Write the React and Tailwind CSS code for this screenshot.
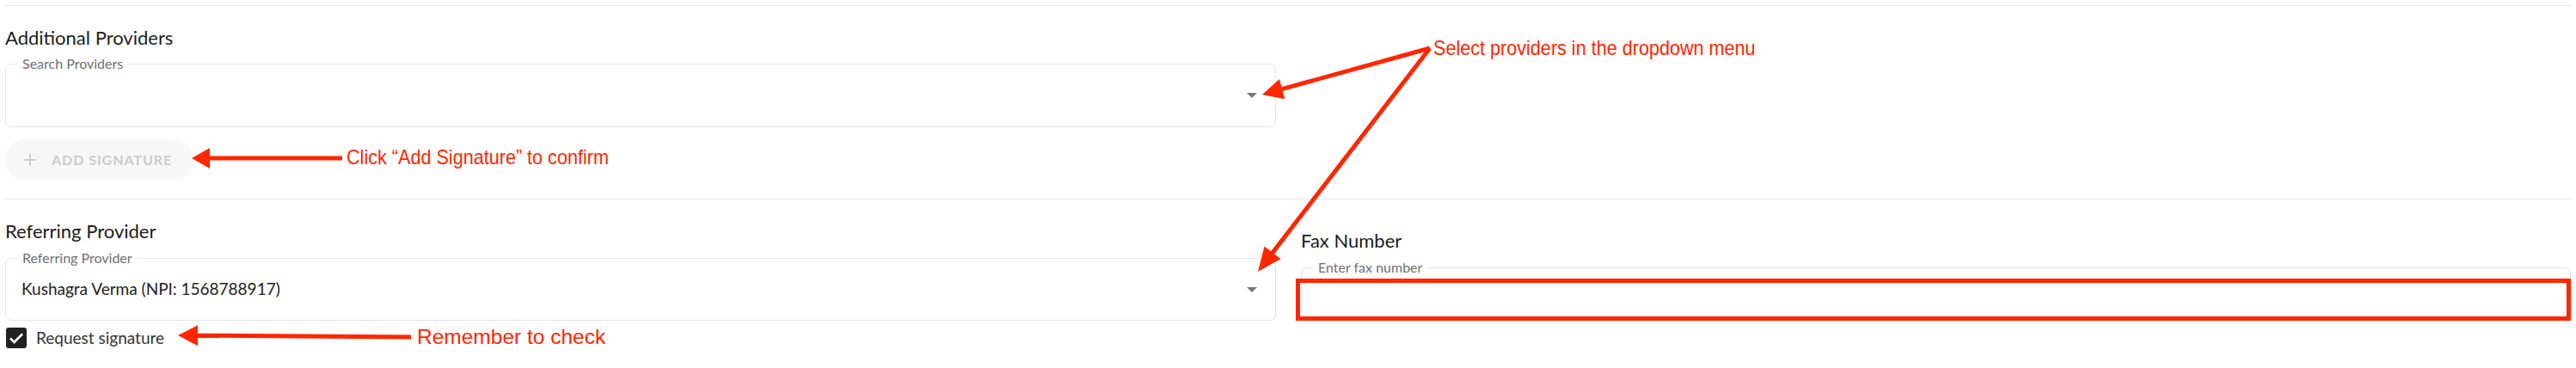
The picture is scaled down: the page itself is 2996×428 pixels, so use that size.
import React from "react";

const RED = "#ff2600";

function Arrow({ x1, y1, x2, y2, len = 24, half = 12 }) {
  const dx = x2 - x1;
  const dy = y2 - y1;
  const d = Math.hypot(dx, dy);
  const ux = dx / d;
  const uy = dy / d;
  const bx = x2 - ux * len;
  const by = y2 - uy * len;
  const px = -uy * half;
  const py = ux * half;
  return (
    <g>
      <line x1={x1} y1={y1} x2={bx + ux * 2} y2={by + uy * 2} stroke={RED} strokeWidth="5" />
      <polygon points={`${x2},${y2} ${bx + px},${by + py} ${bx - px},${by - py}`} fill={RED} />
    </g>
  );
}

function SelectField({ label, value, height = "h-[74px]", arrow = true }) {
  return (
    <div className={`relative ${height} rounded-[7px] border border-[#e4e4e4] flex items-center pl-[18px] pr-[21px]`}>
      <span className="absolute left-[14px] -top-[9px] bg-white px-[5px] text-[16px] leading-[16px] text-[#6f6f6f]">
        {label}
      </span>
      <span className="flex-1 text-[19px] text-[#222222]">{value}</span>
      {arrow && (
        <svg width="12" height="6" viewBox="0 0 12 6" className="shrink-0">
          <path d="M0 0h12L6 6z" fill="#777777" />
        </svg>
      )}
    </div>
  );
}

export default function App() {
  return (
    <div className="relative w-[2996px] h-[428px] bg-white overflow-hidden font-['Lato',sans-serif]">
      <div className="px-[6px] pt-[6px]">
        <div className="h-px bg-[#e6e6e6]" />

        {/* Additional providers */}
        <section className="pt-[23px] w-[1478px]">
          <h2 className="text-[22px] leading-[28px] text-[#1c1c1c]">Additional Providers</h2>
          <div className="mt-[16px]">
            <SelectField label="Search Providers" />
          </div>
          <button
            type="button"
            disabled
            className="mt-[14px] h-[48px] w-[219px] rounded-full bg-[#f7f7f7] flex items-center pl-[21px] gap-[17px]"
          >
            <svg width="16" height="16" viewBox="0 0 16 16">
              <path d="M8 1v14M1 8h14" stroke="#cdcdcd" strokeWidth="2" />
            </svg>
            <span className="text-[16px] font-bold tracking-[0.06em] text-[#cbcbcb]">ADD SIGNATURE</span>
          </button>
        </section>

        <div className="mt-[21px] h-px bg-[#e6e6e6]" />

        {/* Referring provider + fax */}
        <div className="grid grid-cols-[1478px_1477px] gap-x-[29px]">
          <div className="pt-[23px]">
            <h2 className="text-[22px] leading-[28px] text-[#1c1c1c]">Referring Provider</h2>
            <div className="mt-[17px]">
              <SelectField
                label="Referring Provider"
                value="Kushagra Verma (NPI: 1568788917)"
                height="h-[73px]"
              />
            </div>
            <label className="mt-[6px] flex items-center gap-[11px]">
              <span className="ml-px w-[24px] h-[24px] rounded-[3px] bg-[#212121] flex items-center justify-center">
                <svg width="20" height="20" viewBox="0 0 24 24">
                  <path d="M3.5 12.5l5.5 5.5L20.5 6.5" fill="none" stroke="white" strokeWidth="3.2" />
                </svg>
              </span>
              <span className="text-[19px] text-[#333333]">Request signature</span>
            </label>
          </div>

          <div className="pt-[34px]">
            <h2 className="text-[22px] leading-[28px] text-[#1c1c1c]">Fax Number</h2>
            <div className="mt-[17px]">
              <SelectField label="Enter fax number" height="h-[58px]" arrow={false} />
            </div>
          </div>
        </div>
      </div>

      {/* Annotations */}
      <svg className="absolute left-0 top-0 pointer-events-none" width="2996" height="428">
        <Arrow x1={1663} y1={56} x2={1468} y2={110} len={24} half={12} />
        <Arrow x1={1663} y1={56} x2={1463} y2={316} len={28} half={12} />
        <Arrow x1={398} y1={184} x2={223} y2={184} len={21} half={12} />
        <Arrow x1={478} y1={392} x2={207} y2={390} len={23} half={12} />
        <rect x="1509.5" y="326.5" width="1478" height="44" fill="none" stroke={RED} strokeWidth="5" />
      </svg>
      <span className="absolute left-[1667px] top-[44px] origin-left scale-x-90 whitespace-nowrap text-[24px] leading-none text-[#ff2600] font-['Liberation_Sans',Arial,sans-serif]">
        Select providers in the dropdown menu
      </span>
      <span className="absolute left-[403px] top-[171px] origin-left scale-x-90 whitespace-nowrap text-[24px] leading-none text-[#ff2600] font-['Liberation_Sans',Arial,sans-serif]">
        Click “Add Signature” to confirm
      </span>
      <span className="absolute left-[485px] top-[380px] whitespace-nowrap text-[24.5px] leading-none text-[#ff2600] font-['Liberation_Sans',Arial,sans-serif]">
        Remember to check
      </span>
    </div>
  );
}
